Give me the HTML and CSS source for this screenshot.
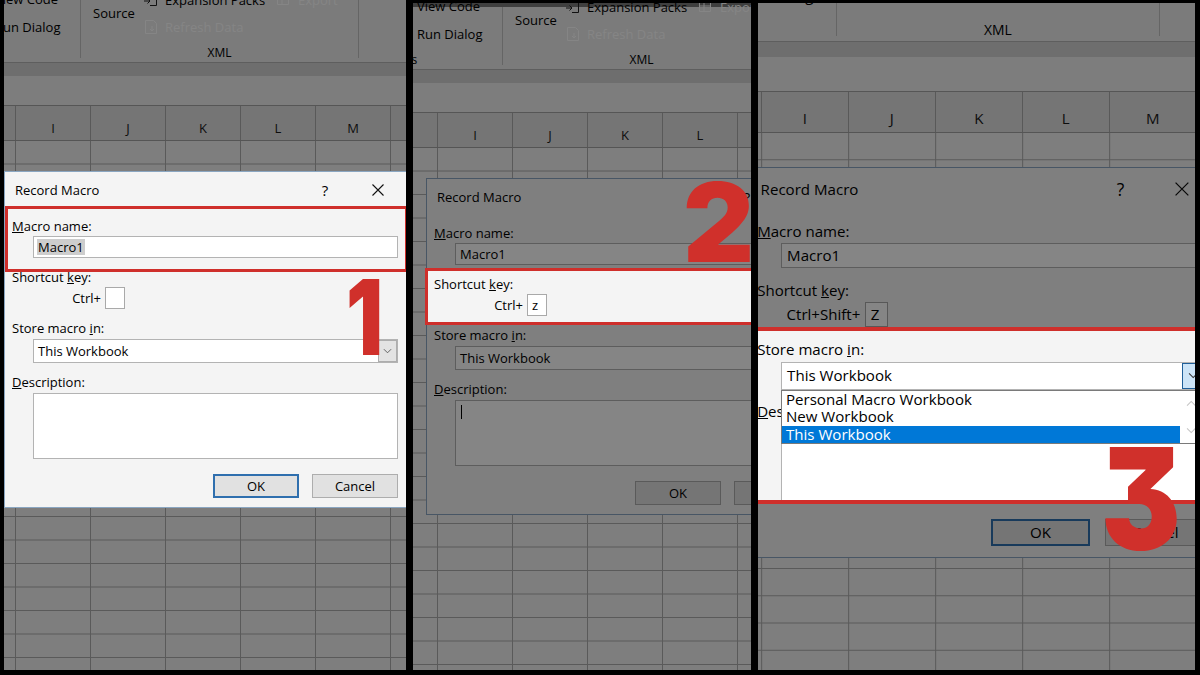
FILE: index.html
```html
<!DOCTYPE html>
<html lang="en">
<head>
<meta charset="utf-8">
<title>Record Macro steps</title>
<link rel="stylesheet" href="styles.css">
</head>
<body>
<main class="frame">

  <!-- PANEL 1 -->
  <section class="panel panel-1">
    <div class="screen">
      <div class="ribbon">
        <div class="grp grp-controls">
          <div class="rb-cmd">View Code</div>
          <div class="rb-cmd">Run Dialog</div>
          <div class="grp-label grp-label-cut">Controls</div>
        </div>
        <div class="rb-sep"></div>
        <div class="grp grp-xml">
          <div class="xml-top">
            <div class="rb-big">Source</div>
            <div class="rb-col rb-col-main">
              <div class="rb-cmd"><svg class="ico" viewBox="0 0 16 16"><path d="M7 2.5h6.5v11H7" fill="none" stroke="#222"/><path d="M1 9h6M4.5 6.5L7 9l-2.5 2.5" fill="none" stroke="#222"/></svg>Expansion Packs</div>
              <div class="rb-cmd is-off"><svg class="ico" viewBox="0 0 16 16"><path d="M2.5 1.5h8l3 3v10h-11z" fill="none" stroke="#fff"/><path d="M9 7v5M7 10l2 2 2-2" fill="none" stroke="#fff"/></svg>Refresh Data</div>
            </div>
            <div class="rb-col">
              <div class="rb-cmd is-off"><svg class="ico" viewBox="0 0 16 16"><path d="M1.5 3.5h11v9h-11zM1.5 7h11M6 3.5v9" fill="none" stroke="#fff"/></svg>Export</div>
            </div>
          </div>
          <div class="grp-label">XML</div>
        </div>
        <div class="rb-sep"></div>
      </div>
      <div class="band"></div>
      <div class="fbar"></div>
      <div class="colhead">
        <span class="col col-lead"></span><span class="col">I</span><span class="col">J</span><span class="col">K</span><span class="col">L</span><span class="col">M</span><span class="col">N</span>
      </div>
      <div class="sheet"></div>

      <div class="dialog">
        <div class="dlg-title">
          <span class="dlg-caption">Record Macro</span>
          <span class="dlg-help">?</span>
          <span class="dlg-close"><svg viewBox="0 0 12 12"><path d="M0.5 0.5L11.5 11.5M11.5 0.5L0.5 11.5" stroke="#111" stroke-width="1.1"/></svg></span>
        </div>
        <div class="dlg-body">
          <div class="lbl"><u>M</u>acro name:</div>
          <div class="field"><span class="sel-text">Macro1</span></div>
          <div class="lbl">Shortcut <u>k</u>ey:</div>
          <div class="key-row"><span class="key-lbl">Ctrl+</span><span class="key-box"></span></div>
          <div class="lbl">Store macro <u>i</u>n:</div>
          <div class="combo"><span class="combo-text">This Workbook</span><span class="combo-btn"><svg viewBox="0 0 10 6"><path d="M1 1l4 4 4-4" fill="none" stroke="#555"/></svg></span></div>
          <div class="lbl"><u>D</u>escription:</div>
          <div class="memo"></div>
          <div class="btn-row"><span class="btn btn-default">OK</span><span class="btn">Cancel</span></div>
        </div>
      </div>

      <div class="shade shade-dialog"></div>
      <div class="callout callout-1"></div>
    </div>
    <div class="num num-1">1</div>
  </section>

  <!-- PANEL 2 -->
  <section class="panel panel-2">
    <div class="screen">
      <div class="ribbon">
        <div class="grp grp-controls">
          <div class="rb-cmd">View Code</div>
          <div class="rb-cmd">Run Dialog</div>
          <div class="grp-label grp-label-cut">Controls</div>
        </div>
        <div class="rb-sep"></div>
        <div class="grp grp-xml">
          <div class="xml-top">
            <div class="rb-big">Source</div>
            <div class="rb-col rb-col-main">
              <div class="rb-cmd"><svg class="ico" viewBox="0 0 16 16"><path d="M7 2.5h6.5v11H7" fill="none" stroke="#222"/><path d="M1 9h6M4.5 6.5L7 9l-2.5 2.5" fill="none" stroke="#222"/></svg>Expansion Packs</div>
              <div class="rb-cmd is-off"><svg class="ico" viewBox="0 0 16 16"><path d="M2.5 1.5h8l3 3v10h-11z" fill="none" stroke="#fff"/><path d="M9 7v5M7 10l2 2 2-2" fill="none" stroke="#fff"/></svg>Refresh Data</div>
            </div>
            <div class="rb-col">
              <div class="rb-cmd is-off"><svg class="ico" viewBox="0 0 16 16"><path d="M1.5 3.5h11v9h-11zM1.5 7h11M6 3.5v9" fill="none" stroke="#fff"/></svg>Export</div>
            </div>
          </div>
          <div class="grp-label">XML</div>
        </div>
        <div class="rb-sep"></div>
      </div>
      <div class="band"></div>
      <div class="fbar"></div>
      <div class="colhead">
        <span class="col col-lead"></span><span class="col">I</span><span class="col">J</span><span class="col">K</span><span class="col">L</span><span class="col">M</span><span class="col">N</span>
      </div>
      <div class="sheet"></div>

      <div class="dialog">
        <div class="dlg-title">
          <span class="dlg-caption">Record Macro</span>
          <span class="dlg-help">?</span>
          <span class="dlg-close"><svg viewBox="0 0 12 12"><path d="M0.5 0.5L11.5 11.5M11.5 0.5L0.5 11.5" stroke="#111" stroke-width="1.1"/></svg></span>
        </div>
        <div class="dlg-body">
          <div class="lbl"><u>M</u>acro name:</div>
          <div class="field"><span class="plain-text">Macro1</span></div>
          <div class="lbl">Shortcut <u>k</u>ey:</div>
          <div class="key-row"><span class="key-lbl">Ctrl+</span><span class="key-box">z</span></div>
          <div class="lbl">Store macro <u>i</u>n:</div>
          <div class="combo"><span class="combo-text">This Workbook</span><span class="combo-btn"><svg viewBox="0 0 10 6"><path d="M1 1l4 4 4-4" fill="none" stroke="#555"/></svg></span></div>
          <div class="lbl"><u>D</u>escription:</div>
          <div class="memo"><span class="caret"></span></div>
          <div class="btn-row"><span class="btn">OK</span><span class="btn">Cancel</span></div>
        </div>
      </div>

      <div class="callout shade callout-2"></div>
    </div>
    <div class="num num-2">2</div>
  </section>

  <!-- PANEL 3 -->
  <section class="panel panel-3">
    <div class="screen">
      <div class="ribbon">
        <div class="grp grp-controls">
          <div class="rb-cmd">View Code</div>
          <div class="rb-cmd">Run Dialog</div>
          <div class="grp-label grp-label-cut">Controls</div>
        </div>
        <div class="rb-sep"></div>
        <div class="grp grp-xml">
          <div class="xml-top">
            <div class="rb-big">Source</div>
            <div class="rb-col rb-col-main">
              <div class="rb-cmd"><svg class="ico" viewBox="0 0 16 16"><path d="M7 2.5h6.5v11H7" fill="none" stroke="#222"/><path d="M1 9h6M4.5 6.5L7 9l-2.5 2.5" fill="none" stroke="#222"/></svg>Expansion Packs</div>
              <div class="rb-cmd is-off"><svg class="ico" viewBox="0 0 16 16"><path d="M2.5 1.5h8l3 3v10h-11z" fill="none" stroke="#fff"/><path d="M9 7v5M7 10l2 2 2-2" fill="none" stroke="#fff"/></svg>Refresh Data</div>
            </div>
            <div class="rb-col">
              <div class="rb-cmd is-off"><svg class="ico" viewBox="0 0 16 16"><path d="M1.5 3.5h11v9h-11zM1.5 7h11M6 3.5v9" fill="none" stroke="#fff"/></svg>Export</div>
            </div>
          </div>
          <div class="grp-label">XML</div>
        </div>
        <div class="rb-sep"></div>
      </div>
      <div class="band"></div>
      <div class="fbar"></div>
      <div class="colhead">
        <span class="col col-lead"></span><span class="col">I</span><span class="col">J</span><span class="col">K</span><span class="col">L</span><span class="col">M</span><span class="col">N</span>
      </div>
      <div class="sheet"></div>

      <div class="dialog">
        <div class="dlg-title">
          <span class="dlg-caption">Record Macro</span>
          <span class="dlg-help">?</span>
          <span class="dlg-close"><svg viewBox="0 0 12 12"><path d="M0.5 0.5L11.5 11.5M11.5 0.5L0.5 11.5" stroke="#111" stroke-width="1.1"/></svg></span>
        </div>
        <div class="dlg-body">
          <div class="lbl"><u>M</u>acro name:</div>
          <div class="field"><span class="plain-text">Macro1</span></div>
          <div class="lbl">Shortcut <u>k</u>ey:</div>
          <div class="key-row"><span class="key-lbl">Ctrl+Shift+</span><span class="key-box">Z</span></div>
          <div class="lbl">Store macro <u>i</u>n:</div>
          <div class="combo"><span class="combo-text">This Workbook</span><span class="combo-btn is-open"><svg viewBox="0 0 10 6"><path d="M1 1l4 4 4-4" fill="none" stroke="#333"/></svg></span></div>
          <div class="lbl"><u>D</u>escription:</div>
          <div class="memo"></div>
          <div class="btn-row"><span class="btn btn-default">OK</span><span class="btn">Cancel</span></div>
        </div>
        <div class="droplist">
          <div class="opt">Personal Macro Workbook</div>
          <div class="opt">New Workbook</div>
          <div class="opt is-sel">This Workbook</div>
          <div class="scroll">
            <svg viewBox="0 0 10 6"><path d="M1 5l4-4 4 4" fill="none" stroke="#c4c4c4"/></svg>
            <svg viewBox="0 0 10 6"><path d="M1 1l4 4 4-4" fill="none" stroke="#c4c4c4"/></svg>
          </div>
        </div>
      </div>

      <div class="callout shade callout-3"></div>
    </div>
    <div class="num num-3">3</div>
  </section>

</main>
</body>
</html>
```

FILE: styles.css
```css
* { box-sizing: border-box; }

html, body { margin: 0; }

body {
  width: 1200px;
  height: 675px;
  overflow: hidden;
  background: #000;
  font-family: "Open Sans", "Noto Sans", "Liberation Sans", sans-serif;
  font-size: 13px;
  color: #000;
}

.frame {
  display: flex;
  align-items: flex-start;
  gap: 7px;
  padding-left: 4px;
  height: 675px;
}

.panel {
  position: relative;
  flex: none;
  overflow: hidden;
  background: #7a7a7a;
}

.panel-1 { width: 402px; height: 670px; }
.panel-2 { width: 338px; height: 667px; margin-top: 3px; }
.panel-3 { width: 437px; height: 667px; margin-top: 3px; }

/* the captured Excel screen */
.screen {
  position: relative;
  width: 420px;
  height: 700px;
}

.panel-1 .screen { margin-left: -15px; }
.panel-2 .screen { margin-left: -2px; margin-top: 4px; }
.panel-3 .screen { zoom: 1.16; margin-left: -23.6px; margin-top: -29.3px; }

/* ribbon */
.ribbon {
  display: flex;
  align-items: flex-start;
  height: 63px;
  background: #ebebeb;
  border-bottom: 1px solid #b4b4b4;
}

.grp {
  display: flex;
  flex-direction: column;
  flex: none;
  margin-top: -10px;
}

.grp-controls {
  width: 91px;
  padding-left: 6px;
  gap: 10px;
}

.panel-3 .grp-controls { margin-top: -14px; padding-bottom: 4px; }

.rb-cmd {
  display: flex;
  align-items: center;
  gap: 6px;
  height: 18px;
  line-height: 18px;
  white-space: nowrap;
}

.grp-label {
  height: 18px;
  line-height: 18px;
  font-size: 12px;
  text-align: center;
  white-space: nowrap;
}

.grp-label-cut {
  margin-top: -2px;
  margin-left: -47px;
  text-align: left;
}

.rb-sep {
  flex: none;
  width: 1px;
  height: 58px;
  background: #c2c2c2;
}

.grp-xml { width: 277px; }

.xml-top {
  display: flex;
  align-items: flex-start;
  height: 54px;
}

.rb-big {
  flex: none;
  width: 62px;
  padding-left: 12px;
  margin-top: 14px;
  line-height: 18px;
}

.rb-col {
  display: flex;
  flex-direction: column;
  gap: 9px;
  margin-top: 1px;
  flex: none;
}

.panel-3 .rb-col { margin-top: -5px; }

.rb-col-main { width: 133px; }

.ico { width: 16px; height: 16px; flex: none; }

.is-off { color: #fff; }

.band { height: 13px; background: #d3d3d3; }

.fbar {
  height: 30px;
  background: #efefef;
  border-bottom: 1px solid #a6a6a6;
}

.colhead {
  display: flex;
  height: 35px;
  background: #e0e0e0;
  border-bottom: 1px solid #a3a3a3;
}

.col {
  flex: none;
  width: 75px;
  display: flex;
  align-items: center;
  justify-content: center;
  padding-top: 10px;
  border-left: 1px solid #ababab;
  color: #1a1a1a;
}

.col-lead { width: 26px; border-left: 0; }

.sheet {
  height: 560px;
  background-color: #f1f1f1;
  background-image:
    linear-gradient(to right, #acacac 1px, transparent 1px),
    linear-gradient(to bottom, transparent 22.5px, #acacac 22.5px);
  background-size: 75px 100%, 100% 23.5px;
  background-position: 26px 0, 0 0;
}

/* Record Macro dialog (a window on the screen) */
.dialog {
  position: absolute;
  left: 15px;
  top: 171px;
  width: 404px;
  height: 337px;
  background: #f4f4f4;
  border: 1px solid #8aa6c1;
}

.dlg-title {
  display: flex;
  align-items: center;
  height: 35px;
  padding-left: 10px;
  padding-right: 19px;
}

.dlg-caption { flex: 1; }

.dlg-help {
  width: 20px;
  margin-right: 33px;
  text-align: center;
  font-size: 15px;
}

.dlg-close {
  width: 20px;
  display: flex;
  justify-content: center;
}

.dlg-close svg { width: 12px; height: 12px; }

.dlg-body { padding: 0 9px 0 7px; }

.lbl {
  height: 18px;
  line-height: 18px;
  margin-top: 10px;
  white-space: nowrap;
}

.field {
  display: flex;
  align-items: center;
  height: 22px;
  margin: 1px 0 0 21px;
  padding-left: 3px;
  background: #fff;
  border: 1px solid #b3b3b3;
}

.sel-text {
  background: #cdcdcd;
  line-height: 16px;
  padding: 0 1px;
}

.plain-text { padding-left: 1px; }

.key-row {
  display: flex;
  align-items: center;
  height: 22px;
  margin-top: 1px;
}

.key-lbl {
  width: 93px;
  padding-right: 4px;
  text-align: right;
  white-space: nowrap;
}

.key-box {
  width: 20px;
  height: 22px;
  line-height: 20px;
  padding-left: 4px;
  background: #fff;
  border: 1px solid #a9a9a9;
}

.combo {
  display: flex;
  height: 24px;
  margin: 2px 0 0 21px;
  background: #fff;
  border: 1px solid #b3b3b3;
}

.combo-text {
  flex: 1;
  padding-left: 4px;
  line-height: 22px;
}

.combo-btn {
  width: 19px;
  display: flex;
  align-items: center;
  justify-content: center;
  background: #e3e3e3;
  border: 1px solid #adadad;
}

.combo-btn svg { width: 9px; height: 6px; }

.combo-btn.is-open {
  background: #cce4f7;
  border-color: #1f5f99;
}

.memo {
  height: 66px;
  margin: 2px 0 0 21px;
  padding: 4px 0 0 5px;
  background: #fff;
  border: 1px solid #b3b3b3;
}

.caret {
  display: block;
  width: 1px;
  height: 14px;
  background: #000;
}

.btn-row {
  display: flex;
  justify-content: flex-end;
  gap: 13px;
  margin-top: 15px;
}

.btn {
  width: 86px;
  height: 24px;
  display: flex;
  align-items: center;
  justify-content: center;
  background: #e1e1e1;
  border: 1px solid #adadad;
}

.btn-default { border: 2px solid #2f6fae; }

/* open drop-down list (panel 3) */
.droplist {
  position: absolute;
  left: 28px;
  top: 191px;
  width: 365px;
  display: flex;
  flex-direction: column;
  padding-right: 21px;
  background: #fff;
  border: 1px solid #7a7a7a;
}

.opt {
  height: 15px;
  line-height: 15px;
  padding-left: 3px;
  white-space: nowrap;
}

.opt.is-sel { background: #0078d7; color: #fff; }

.scroll {
  position: absolute;
  top: 0;
  right: 0;
  bottom: 0;
  width: 21px;
  display: flex;
  flex-direction: column;
  align-items: center;
  justify-content: space-around;
}

.scroll svg { width: 9px; height: 6px; }

/* dimming + red callouts */
.shade {
  position: absolute;
  box-shadow: 0 0 0 3000px rgba(0, 0, 0, 0.48);
  pointer-events: none;
}

.shade-dialog { left: 15px; top: 171px; width: 404px; height: 337px; }

.callout {
  position: absolute;
  border: 3px solid #cf2f2b;
}

.callout-1 { left: 16px; top: 206px; width: 403px; height: 66px; }
.callout-2 { left: 14px; top: 261px; width: 430px; height: 57px; }
.callout-3 { left: -30px; top: 309px; width: 480px; height: 152px; border-width: 3.5px; }

/* big step numbers */
.num {
  position: absolute;
  z-index: 2;
  font-family: Inter, "DejaVu Sans", sans-serif;
  font-weight: 900;
  line-height: 1;
  color: #d0302b;
  font-feature-settings: "cv09";
  transform-origin: 0 0;
}

.num-1 { left: 342px; top: 264px; font-size: 105px; transform: scaleX(0.78); }
.num-2 { left: 270px; top: 164px; font-size: 110px; }
.num-3 { left: 343px; top: 424px; font-size: 142px; transform: scaleX(0.84); }
```
